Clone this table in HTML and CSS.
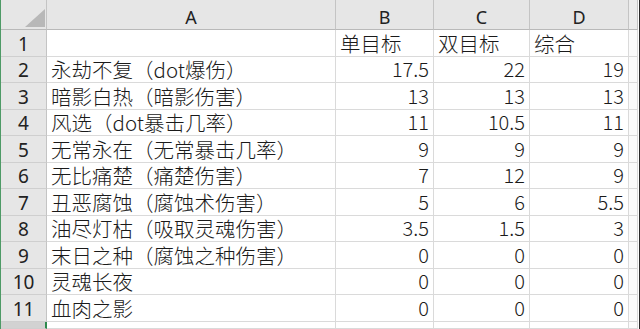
FILE: index.html
```html
<!DOCTYPE html>
<html>
<head>
<meta charset="utf-8">
<link rel="stylesheet" href="styles.css">
</head>
<body>
<div class="sheet">
  <div class="hd corner"><svg class="tri" width="20" height="18" viewBox="0 0 20 18"><polygon points="20,0 20,18 0,18" fill="#b8b8b8"/></svg></div>
  <div class="hd col">A</div>
  <div class="hd col">B</div>
  <div class="hd col">C</div>
  <div class="hd col">D</div>
  <div class="hd col edge"></div>

  <div class="rh">1</div><div class="c"></div><div class="c">单目标</div><div class="c">双目标</div><div class="c">综合</div><div class="c edge"></div>
  <div class="rh">2</div><div class="c">永劫不复（dot爆伤）</div><div class="c n">17.5</div><div class="c n">22</div><div class="c n">19</div><div class="c edge"></div>
  <div class="rh">3</div><div class="c">暗影白热（暗影伤害）</div><div class="c n">13</div><div class="c n">13</div><div class="c n">13</div><div class="c edge"></div>
  <div class="rh">4</div><div class="c">风选（dot暴击几率）</div><div class="c n">11</div><div class="c n">10.5</div><div class="c n">11</div><div class="c edge"></div>
  <div class="rh">5</div><div class="c">无常永在（无常暴击几率）</div><div class="c n">9</div><div class="c n">9</div><div class="c n">9</div><div class="c edge"></div>
  <div class="rh">6</div><div class="c">无比痛楚（痛楚伤害）</div><div class="c n">7</div><div class="c n">12</div><div class="c n">9</div><div class="c edge"></div>
  <div class="rh">7</div><div class="c">丑恶腐蚀（腐蚀术伤害）</div><div class="c n">5</div><div class="c n">6</div><div class="c n">5.5</div><div class="c edge"></div>
  <div class="rh">8</div><div class="c">油尽灯枯（吸取灵魂伤害）</div><div class="c n">3.5</div><div class="c n">1.5</div><div class="c n">3</div><div class="c edge"></div>
  <div class="rh">9</div><div class="c">末日之种（腐蚀之种伤害）</div><div class="c n">0</div><div class="c n">0</div><div class="c n">0</div><div class="c edge"></div>
  <div class="rh">10</div><div class="c">灵魂长夜</div><div class="c n">0</div><div class="c n">0</div><div class="c n">0</div><div class="c edge"></div>
  <div class="rh">11</div><div class="c">血肉之影</div><div class="c n">0</div><div class="c n">0</div><div class="c n">0</div><div class="c edge"></div>

  <div class="rh sel"></div><div class="c"></div><div class="c"></div><div class="c"></div><div class="c"></div><div class="c edge"></div>
</div>
</body>
</html>
```

FILE: styles.css
```css
html, body {
  margin: 0;
  padding: 0;
  background: #ffffff;
}

.sheet {
  display: grid;
  grid-template-columns: 46px 289px 98px 96px 99px 9px;
  grid-template-rows: 30px repeat(11, 26.5px) 1fr;
  width: 638px;
  height: 329px;
  border-left: 1px solid #4e9a66;
  border-right: 2px solid #2b2b2b;
  box-sizing: content-box;
  overflow: hidden;
  font-family: "Noto Sans CJK SC", sans-serif;
  color: #1a1a1a;
}

.sheet > div {
  box-sizing: border-box;
  min-width: 0;
  white-space: nowrap;
}

.hd {
  background: #e6e6e6;
  border-right: 1px solid #c4c4c4;
  border-bottom: 1px solid #b9b9b9;
  display: flex;
  align-items: center;
  justify-content: center;
  font-family: "Noto Sans", "Noto Sans CJK SC", sans-serif;
  font-size: 18px;
  line-height: 22px;
  color: #222;
  padding-top: 4px;
}

.corner {
  position: relative;
}

.tri {
  position: absolute;
  left: 24px;
  top: 9px;
}

.rh {
  background: #e6e6e6;
  border-right: 1px solid #c4c4c4;
  border-bottom: 1px solid #cfcfcf;
  display: flex;
  align-items: flex-end;
  justify-content: center;
  font-family: "Noto Sans", sans-serif;
  font-size: 19px;
  line-height: 22px;
  padding-bottom: 1px;
  color: #222;
}

.rh.sel {
  background: #d2d2d2;
  border-right: 2px solid #2e8a4e;
}

.c {
  border-right: 1px solid #dadada;
  border-bottom: 1px solid #dadada;
  display: flex;
  align-items: flex-end;
  padding: 0 4px 1px 4px;
  font-size: 20.5px;
  font-weight: 300;
  line-height: 24px;
}

.c.n {
  justify-content: flex-end;
  font-size: 20px;
}

.edge {
  background: #fbfbfb;
}

.hd.edge {
  background: #ececec;
}
```
